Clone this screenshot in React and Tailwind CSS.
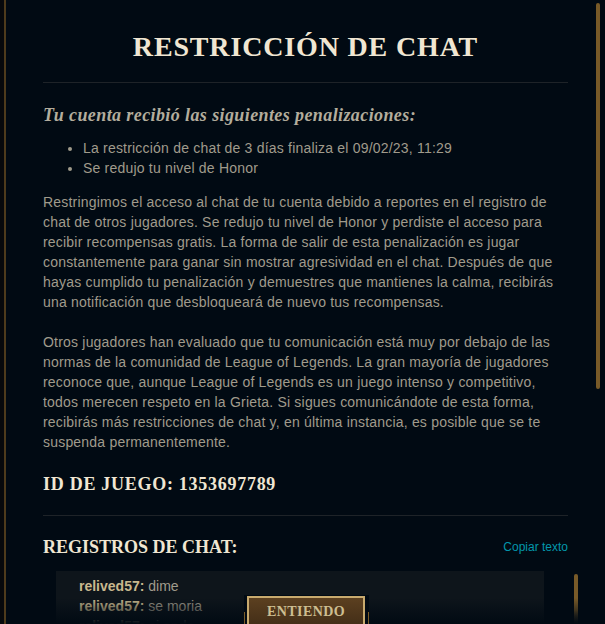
import React from 'react';

const serif = "font-['Liberation_Serif','Times_New_Roman',serif]";
const sans = "font-['Liberation_Sans',Arial,sans-serif]";

const penalties = [
  'La restricción de chat de 3 días finaliza el 09/02/23, 11:29',
  'Se redujo tu nivel de Honor',
];

const paragraphOne = [
  'Restringimos el acceso al chat de tu cuenta debido a reportes en el registro de',
  'chat de otros jugadores. Se redujo tu nivel de Honor y perdiste el acceso para',
  'recibir recompensas gratis. La forma de salir de esta penalización es jugar',
  'constantemente para ganar sin mostrar agresividad en el chat. Después de que',
  'hayas cumplido tu penalización y demuestres que mantienes la calma, recibirás',
  'una notificación que desbloqueará de nuevo tus recompensas.',
];

const paragraphTwo = [
  'Otros jugadores han evaluado que tu comunicación está muy por debajo de las',
  'normas de la comunidad de League of Legends. La gran mayoría de jugadores',
  'reconoce que, aunque League of Legends es un juego intenso y competitivo,',
  'todos merecen respeto en la Grieta. Si sigues comunicándote de esta forma,',
  'recibirás más restricciones de chat y, en última instancia, es posible que se te',
  'suspenda permanentemente.',
];

const chatLog = [
  { name: 'relived57', text: 'dime' },
  { name: 'relived57', text: 'se moria' },
  { name: 'relived57', text: 'ai ando' },
];

const Paragraph = ({ lines, className = '' }) => (
  <p className={`text-[14px] leading-5 tracking-[0.2px] text-[#a09b8c] ${className}`}>
    {lines.map((line, i) => (
      <span key={i} className="block whitespace-nowrap">{line}</span>
    ))}
  </p>
);

export default function App() {
  return (
    <div className={`flex h-[624px] w-[605px] overflow-hidden bg-[#010a13] ${sans}`}>
      {/* app behind the modal */}
      <div className="w-[4px] bg-[#07090c]" />
      <div className="w-[2px] bg-[#4e3b1c]" />

      <div className="relative flex-1">
        <div className="pl-[37px] w-[562px]">
          <h1 className={`pt-[29px] text-center text-[28px] leading-9 font-bold tracking-[0.03em] text-[#f0e6d2] ${serif}`}>
            RESTRICCIÓN DE CHAT
          </h1>
          <div className="mt-[17px] h-px bg-[#1e2328]" />

          <h2 className={`mt-5 text-[18px] leading-6 font-bold italic tracking-[0.4px] text-[#b3ad9d] ${serif}`}>
            Tu cuenta recibió las siguientes penalizaciones:
          </h2>

          <ul className="mt-[11px] list-disc pl-10 text-[14px] leading-5 tracking-[0.2px] text-[#a09b8c]">
            {penalties.map((p) => (
              <li key={p}>{p}</li>
            ))}
          </ul>

          <Paragraph lines={paragraphOne} className="mt-[14px]" />
          <Paragraph lines={paragraphTwo} className="mt-5" />

          <div className={`mt-5 text-[18px] leading-6 font-bold tracking-[0.04em] text-[#f0e6d2] ${serif}`}>
            ID DE JUEGO: 1353697789
          </div>
          <div className="mt-[19px] h-px bg-[#1e2328]" />

          <div className="mt-[19px] flex items-center justify-between">
            <span className={`text-[18px] leading-6 font-bold text-[#f0e6d2] ${serif}`}>
              REGISTROS DE CHAT:
            </span>
            <span className="text-[12px] text-[#0397ab]">Copiar texto</span>
          </div>

          <div className="relative mt-3 flex">
            <div className="ml-[13px] w-[488px] shrink-0 bg-[#0e151b] pt-[5px] pl-[23px] pb-4">
              {chatLog.map((m, i) => (
                <div key={i} className="text-[14px] leading-5">
                  <span className="font-bold text-[#c8b88e]">{m.name}:</span>{' '}
                  <span className="text-[#a09b8c]">{m.text}</span>
                </div>
              ))}
            </div>
            <div className="ml-[30px] mt-[3px] w-[4px] h-[60px] shrink-0 rounded-full bg-gradient-to-b from-[#785a28] from-60% to-[#010a13]" />
          </div>
        </div>

        {/* bottom fade over chat */}
        <div className="absolute left-0 right-0 bottom-0 h-[26px] bg-gradient-to-b from-transparent to-[#010a13]" />

        {/* main scrollbar */}
        <div className="absolute left-[590px] top-[3px] h-[386px] w-[4px] rounded-full bg-[#785a28]" />

        {/* button */}
        <div className="absolute left-[238px] top-[595px] w-[125px] h-[40px] bg-[#010a13]">
          <div className="absolute left-0 top-[17px] w-px h-[20px] bg-[#7a5c29]" />
          <div className="absolute right-0 top-[17px] w-px h-[20px] bg-[#7a5c29]" />
          <button
            className={`absolute left-[3px] top-[1px] w-[118px] h-[36px] border-2 border-[#c8aa6e] bg-gradient-to-b from-[#5c4020] to-[#3f2b16] text-[14px] leading-5 font-bold tracking-[0.03em] text-[#cdbe91] ${serif}`}
          >
            <span className="block -mt-[4px]">ENTIENDO</span>
          </button>
        </div>
      </div>
    </div>
  );
}
